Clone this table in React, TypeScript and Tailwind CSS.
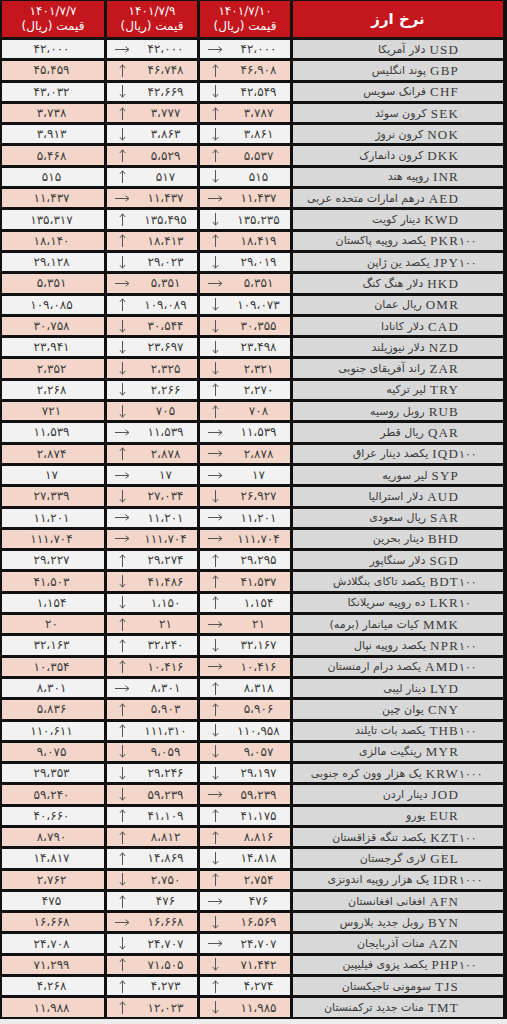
const FA = "۰۱۲۳۴۵۶۷۸۹";
const fa = (s: string) => s.replace(/\d/g, (d) => FA[+d]).replace(/,/g, "،");

type Arrow = "u" | "d" | "r";
type Row = [string, string, string, Arrow, string, Arrow, string, string];

// code, suffix, name, arrow 7/10, price 7/10, arrow 7/9, price 7/9, price 7/7
const ROWS: Row[] = [
  ["USD", "", "دلار آمریکا", "r", "42,000", "r", "42,000", "42,000"],
  ["GBP", "", "پوند انگلیس", "u", "46,908", "u", "46,748", "45,459"],
  ["CHF", "", "فرانک سویس", "d", "42,549", "d", "42,669", "43,032"],
  ["SEK", "", "کرون سوئد", "u", "3,787", "u", "3,777", "3,738"],
  ["NOK", "", "کرون نروژ", "d", "3,861", "d", "3,863", "3,913"],
  ["DKK", "", "کرون دانمارک", "u", "5,537", "u", "5,529", "5,468"],
  ["INR", "", "روپیه هند", "d", "515", "u", "517", "515"],
  ["AED", "", "درهم امارات متحده عربی", "r", "11,437", "r", "11,437", "11,437"],
  ["KWD", "", "دینار کویت", "d", "135,235", "u", "135,495", "135,317"],
  ["PKR", "100", "یکصد روپیه پاکستان", "u", "18,419", "u", "18,413", "18,140"],
  ["JPY", "100", "یکصد ین ژاپن", "d", "29,019", "d", "29,023", "29,128"],
  ["HKD", "", "دلار هنگ کنگ", "r", "5,351", "r", "5,351", "5,351"],
  ["OMR", "", "ریال عمان", "d", "109,073", "u", "109,089", "109,085"],
  ["CAD", "", "دلار کانادا", "d", "30,355", "d", "30,544", "30,758"],
  ["NZD", "", "دلار نیوزیلند", "d", "23,498", "d", "23,697", "23,941"],
  ["ZAR", "", "راند آفریقای جنوبی", "d", "2,321", "d", "2,325", "2,352"],
  ["TRY", "", "لیر ترکیه", "u", "2,270", "d", "2,266", "2,268"],
  ["RUB", "", "روبل روسیه", "u", "708", "d", "705", "721"],
  ["QAR", "", "ریال قطر", "r", "11,539", "r", "11,539", "11,539"],
  ["IQD", "100", "یکصد دینار عراق", "r", "2,878", "u", "2,878", "2,874"],
  ["SYP", "", "لیر سوریه", "r", "17", "r", "17", "17"],
  ["AUD", "", "دلار استرالیا", "d", "26,927", "d", "27,034", "27,339"],
  ["SAR", "", "ریال سعودی", "r", "11,201", "r", "11,201", "11,201"],
  ["BHD", "", "دینار بحرین", "r", "111,704", "r", "111,704", "111,704"],
  ["SGD", "", "دلار سنگاپور", "u", "29,295", "u", "29,274", "29,227"],
  ["BDT", "100", "یکصد تاکای بنگلادش", "u", "41,537", "d", "41,486", "41,503"],
  ["LKR", "10", "ده روپیه سریلانکا", "u", "1,154", "d", "1,150", "1,154"],
  ["MMK", "", "کیات میانمار (برمه)", "r", "21", "u", "21", "20"],
  ["NPR", "100", "یکصد روپیه نپال", "d", "32,167", "u", "32,240", "32,163"],
  ["AMD", "100", "یکصد درام ارمنستان", "r", "10,416", "u", "10,416", "10,354"],
  ["LYD", "", "دینار لیبی", "u", "8,318", "r", "8,301", "8,301"],
  ["CNY", "", "یوان چین", "u", "5,906", "u", "5,903", "5,836"],
  ["THB", "100", "یکصد بات تایلند", "d", "110,958", "u", "111,310", "110,611"],
  ["MYR", "", "رینگیت مالزی", "d", "9,057", "d", "9,059", "9,075"],
  ["KRW", "1000", "یک هزار وون کره جنوبی", "d", "29,197", "d", "29,246", "29,353"],
  ["JOD", "", "دینار اردن", "r", "59,239", "d", "59,239", "59,240"],
  ["EUR", "", "یورو", "u", "41,175", "u", "41,109", "40,660"],
  ["KZT", "100", "یکصد تنگه قزاقستان", "u", "8,816", "u", "8,812", "8,790"],
  ["GEL", "", "لاری گرجستان", "d", "14,818", "u", "14,869", "14,817"],
  ["IDR", "1000", "یک هزار روپیه اندونزی", "u", "2,754", "d", "2,750", "2,762"],
  ["AFN", "", "افغانی افغانستان", "r", "476", "u", "476", "475"],
  ["BYN", "", "روبل جدید بلاروس", "d", "16,569", "r", "16,668", "16,668"],
  ["AZN", "", "منات آذربایجان", "r", "24,707", "d", "24,707", "24,708"],
  ["PHP", "100", "یکصد پزوی فیلیپین", "d", "71,442", "u", "71,505", "71,299"],
  ["TJS", "", "سومونی تاجیکستان", "u", "4,274", "u", "4,273", "4,268"],
  ["TMT", "", "منات جدید ترکمنستان", "d", "11,985", "u", "12,023", "11,988"],
];

const faFont = "font-['DejaVu_Sans',sans-serif]";

// thin arrows, drawn rather than using the heavier font glyphs
function ArrowIcon({ dir }: { dir: Arrow }) {
  if (dir === "r") {
    return (
      <svg width="15" height="7" viewBox="0 0 15 7" className="text-[#555]" aria-hidden>
        <path d="M0 3.5H14M10.5 0.8L14 3.5L10.5 6.2" fill="none" stroke="currentColor" strokeWidth="1" />
      </svg>
    );
  }
  return (
    <svg
      width="7"
      height="13"
      viewBox="0 0 7 13"
      className={`text-[#555] ${dir === "d" ? "rotate-180" : ""}`}
      aria-hidden
    >
      <path d="M3.5 13V0.8M0.8 4L3.5 0.8L6.2 4" fill="none" stroke="currentColor" strokeWidth="1" />
    </svg>
  );
}

function PriceHead({ date }: { date: string }) {
  return (
    <div className={`flex flex-col items-center justify-center bg-[#c4161c] text-[12px] leading-[15px] text-white ${faFont}`}>
      <span>{fa(date)}</span>
      <span dir="rtl">قیمت (ریال)</span>
    </div>
  );
}

function PriceCell({ arrow, value, bg }: { arrow?: Arrow; value: string; bg: string }) {
  return (
    <div className={`flex h-[18.3px] items-center ${bg} text-[12px] text-[#3b3b3b] ${faFont}`}>
      {arrow && (
        <span className="flex w-[30px] justify-center">
          <ArrowIcon dir={arrow} />
        </span>
      )}
      <span className="flex-1 pr-[3px] text-center leading-none">{fa(value)}</span>
    </div>
  );
}

export default function App() {
  return (
    <div className="min-h-screen bg-[#ececec]">
      <div className="bg-[#111] pb-[2px] pl-[2px] pr-[4px] pt-[1px]">
        <div className="grid grid-cols-[102px_90px_90px_210px] gap-x-[3px] gap-y-[3px]">
          <PriceHead date="1401/7/7" />
          <PriceHead date="1401/7/9" />
          <PriceHead date="1401/7/10" />
          <div
            dir="rtl"
            className={`flex h-[36px] items-center justify-center bg-[#c4161c] text-[15px] font-bold text-white ${faFont}`}
          >
            نرخ ارز
          </div>
          {ROWS.map(([code, suffix, name, a3, p3, a2, p2, p1], i) => {
            const bg = i % 2 === 0 ? "bg-[#f2f2f2]" : "bg-[#f3d6c9]";
            return (
              <div key={code} className="contents">
                <PriceCell value={p1} bg={bg} />
                <PriceCell arrow={a2} value={p2} bg={bg} />
                <PriceCell arrow={a3} value={p3} bg={bg} />
                <div
                  dir="rtl"
                  className="flex h-[18.3px] items-center gap-[4px] whitespace-nowrap bg-[#d8d8d8] pr-[44px] text-[#3a3a3a]"
                >
                  <span dir="ltr" className="font-['Liberation_Serif',serif] text-[13px] leading-none tracking-[1.2px]">
                    {code}
                    <span className={`inline-block w-0 text-[11px] tracking-[2px] ${faFont}`}>{fa(suffix)}</span>
                  </span>
                  <span className={`text-[11px] leading-none ${faFont}`}>{name}</span>
                </div>
              </div>
            );
          })}
        </div>
      </div>
    </div>
  );
}
